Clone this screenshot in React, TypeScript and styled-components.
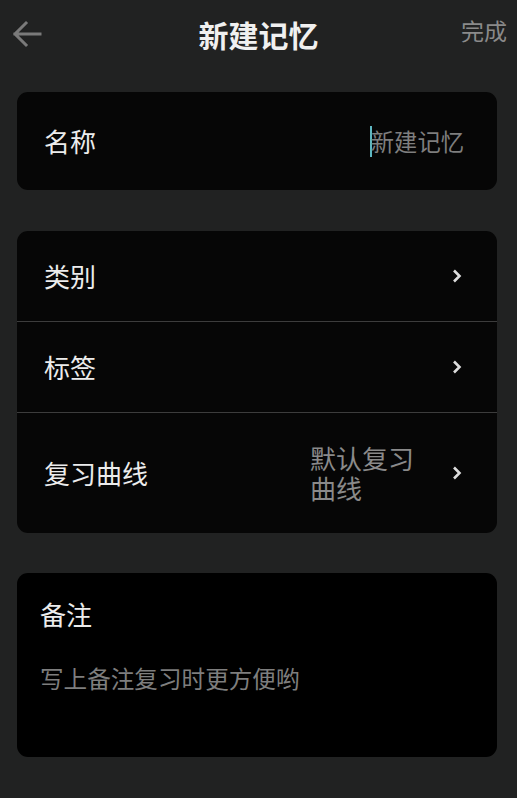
import { FC } from 'react';
import styled, { createGlobalStyle } from 'styled-components';

const GlobalStyle = createGlobalStyle`
    html, body {
        margin: 0;
        padding: 0;
        background-color: #212222;
    }
    body {
        font-family: "Noto Sans CJK SC", "Noto Sans", sans-serif;
    }
`;

const Page = styled.div`
    width: 517px;
    min-height: 798px;
    background-color: #212222;
`;

const Header = styled.div`
    position: relative;
    height: 70px;
    display: flex;
    align-items: center;
    justify-content: center;
`;

const BackButton = styled.div`
    position: absolute;
    left: 12px;
    top: 20px;
    width: 30px;
    height: 28px;
    display: flex;
    align-items: center;
    justify-content: center;
`;

const Title = styled.h1`
    margin: 0;
    font-size: 30px;
    line-height: 40px;
    font-weight: 700;
    color: #f0f0f0;
    margin-top: -3px;
`;

const Done = styled.div`
    position: absolute;
    right: 10px;
    top: 13px;
    font-size: 23px;
    line-height: 34px;
    color: #8a8a8a;
`;

const Content = styled.div`
    padding: 22px 20px 0 17px;
    display: flex;
    flex-direction: column;
`;

const Card = styled.div<{ $gap?: number; $bg?: string }>`
    margin-top: ${p => p.$gap ?? 0}px;
    background-color: ${p => p.$bg ?? '#060606'};
    border-radius: 11px;
    overflow: hidden;
`;

const Row = styled.div<{ $height: number; $divider?: boolean }>`
    height: ${p => p.$height}px;
    display: flex;
    align-items: center;
    padding: 0 35px 0 27px;
    border-top: ${p => (p.$divider ? '1px solid #3c3c3c' : 'none')};
    box-sizing: border-box;
`;

const Label = styled.div`
    flex: 1;
    font-size: 26px;
    line-height: 34px;
    color: #ececec;
`;

const InputWrap = styled.div`
    display: flex;
    align-items: center;
    margin-right: -2px;
`;

const Cursor = styled.span`
    width: 2px;
    height: 31px;
    background-color: #5fb7c2;
    margin-right: -1px;
`;

const Placeholder = styled.span`
    font-size: 23.3px;
    line-height: 34px;
    color: #7e7e7e;
`;

const Value = styled.div`
    width: 106px;
    margin-right: 36px;
    font-size: 26px;
    line-height: 30px;
    color: #8a8a8a;
`;

const NoteCard = styled.div`
    margin-top: 40px;
    height: 184px;
    background-color: #000000;
    border-radius: 11px;
    padding: 23px 23px 0 23px;
    box-sizing: border-box;
`;

const NoteTitle = styled.div`
    font-size: 26px;
    line-height: 36px;
    color: #ececec;
`;

const NotePlaceholder = styled.div`
    margin-top: 29px;
    font-size: 23.6px;
    line-height: 34px;
    color: #7e7e7e;
`;

const ArrowLeft: FC = () => (
    <svg width="30" height="28" viewBox="0 0 30 28" fill="none">
        <path d="M28 14H3M14 3L3 14L14 25" stroke="#7a7a7a" strokeWidth="3" strokeLinecap="square" />
    </svg>
);

const Chevron: FC = () => (
    <svg width="10" height="14" viewBox="0 0 10 14" fill="none">
        <path d="M2 1.5L7.5 7L2 12.5" stroke="#dcdcdc" strokeWidth="2.6" />
    </svg>
);

const App: FC = () => {
    return (
        <Page>
            <GlobalStyle />
            <Header>
                <BackButton>
                    <ArrowLeft />
                </BackButton>
                <Title>新建记忆</Title>
                <Done>完成</Done>
            </Header>

            <Content>
                <Card>
                    <Row $height={98}>
                        <Label>名称</Label>
                        <InputWrap>
                            <Cursor />
                            <Placeholder>新建记忆</Placeholder>
                        </InputWrap>
                    </Row>
                </Card>

                <Card $gap={41}>
                    <Row $height={90}>
                        <Label>类别</Label>
                        <Chevron />
                    </Row>
                    <Row $height={91} $divider>
                        <Label>标签</Label>
                        <Chevron />
                    </Row>
                    <Row $height={121} $divider>
                        <Label>复习曲线</Label>
                        <Value>默认复习曲线</Value>
                        <Chevron />
                    </Row>
                </Card>

                <NoteCard>
                    <NoteTitle>备注</NoteTitle>
                    <NotePlaceholder>写上备注复习时更方便哟</NotePlaceholder>
                </NoteCard>
            </Content>
        </Page>
    );
};

export default App;
